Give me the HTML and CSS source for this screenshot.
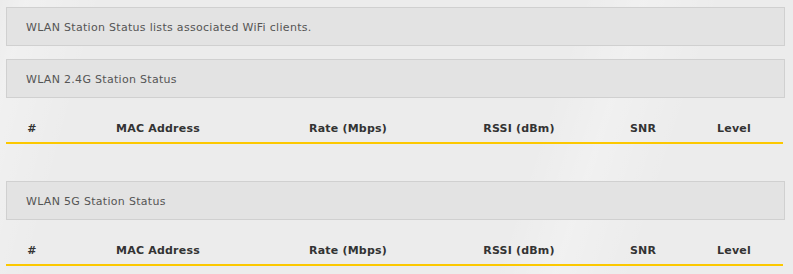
FILE: index.html
```html
<!DOCTYPE html>
<html>
<head>
<meta charset="utf-8">
<link rel="stylesheet" href="styles.css">
</head>
<body>
<div class="page">
  <div class="box intro">WLAN Station Status lists associated WiFi clients.</div>
  <section class="group">
    <div class="box title">WLAN 2.4G Station Status</div>
    <div class="thead">
      <span>#</span><span>MAC Address</span><span>Rate (Mbps)</span><span>RSSI (dBm)</span><span>SNR</span><span>Level</span>
    </div>
  </section>
  <section class="group second">
    <div class="box title">WLAN 5G Station Status</div>
    <div class="thead">
      <span>#</span><span>MAC Address</span><span>Rate (Mbps)</span><span>RSSI (dBm)</span><span>SNR</span><span>Level</span>
    </div>
  </section>
</div>
</body>
</html>
```
FILE: styles.css
```css
html, body {
  margin: 0;
  padding: 0;
  height: 100%;
}
body {
  background-color: #ececec;
  background-image:
    linear-gradient(105deg, rgba(255,255,255,0) 0%, rgba(255,255,255,0.25) 3%, rgba(255,255,255,0) 12%),
    linear-gradient(108deg, rgba(255,255,255,0) 66%, rgba(255,255,255,0.25) 73%, rgba(255,255,255,0) 82%);
  font-family: "DejaVu Sans", "Liberation Sans", sans-serif;
  overflow: hidden;
}
.page {
  padding: 7px 8px 0 6px;
  display: flex;
  flex-direction: column;
}
.box {
  box-sizing: border-box;
  height: 39px;
  background: #e3e3e3;
  border: 1px solid #d0d0d0;
  padding: 2px 0 0 19px;
  display: flex;
  align-items: center;
  font-size: 11px;
  color: #555;
  letter-spacing: 0.3px;
}
.intro {
  margin-bottom: 13px;
}
.second {
  margin-top: 37px;
}
.thead {
  margin-top: 13px;
  height: 33px;
  box-sizing: border-box;
  padding-top: 3px;
  border-bottom: 2px solid #fcc800;
  display: grid;
  grid-template-columns: 52px 200px 180px 162px 86px 96px;
  align-items: center;
  font-size: 11px;
  font-weight: bold;
  letter-spacing: 0.2px;
  color: #333;
  margin-right: 2px;
}
.thead span {
  text-align: center;
}
```
